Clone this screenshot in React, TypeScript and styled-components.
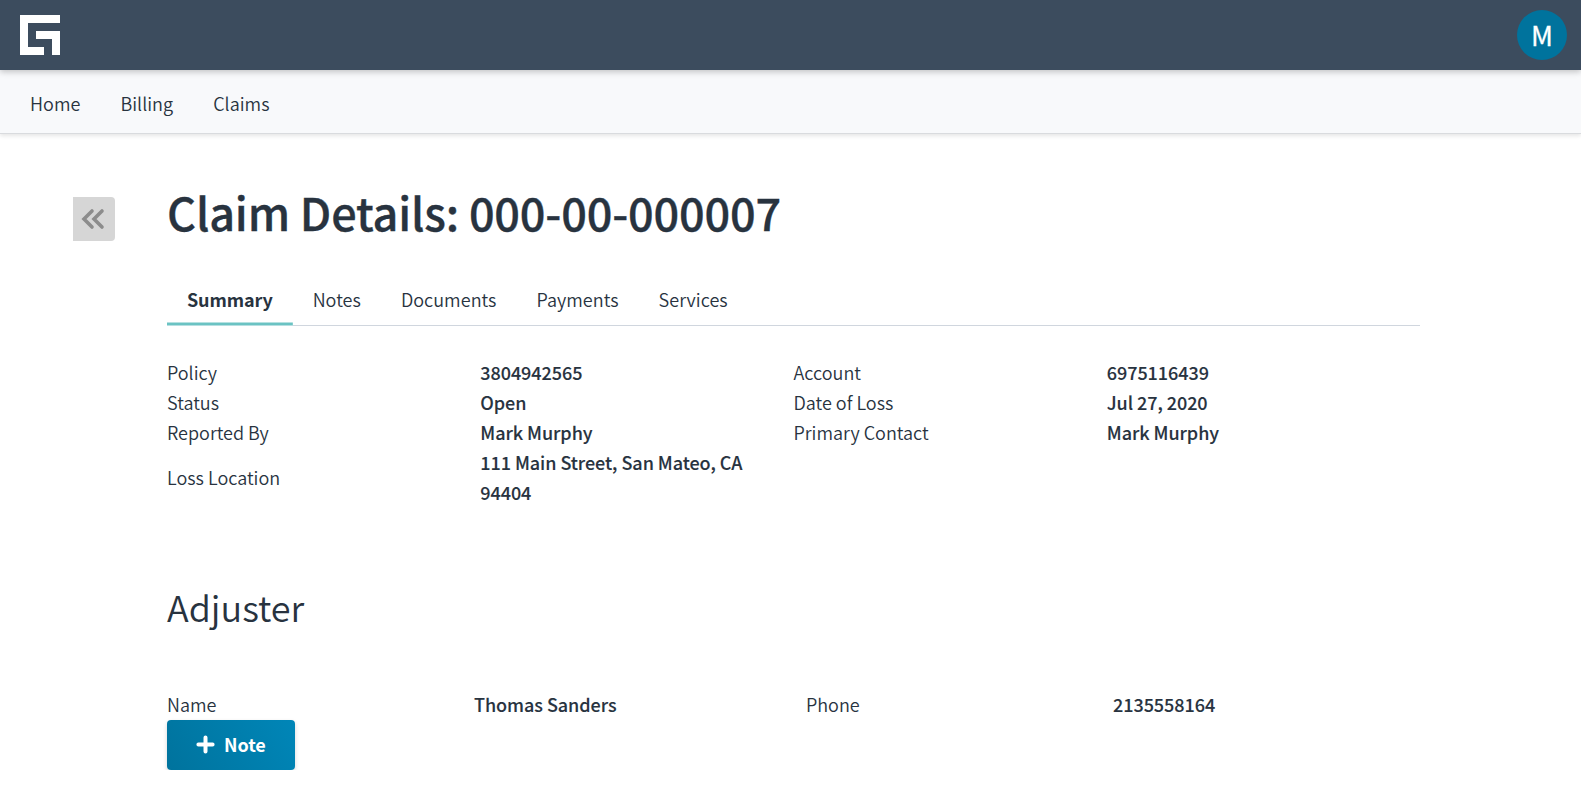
import React from "react";
import styled, { createGlobalStyle } from "styled-components";

const GlobalStyle = createGlobalStyle`
  *, *::before, *::after { box-sizing: border-box; }
  body {
    margin: 0;
    background: #fff;
    color: #28333f;
    font-family: "Noto Sans CJK SC", "Noto Sans", sans-serif;
    font-size: 18px;
    font-weight: 350;
    line-height: 30px;
    letter-spacing: 0;
  }
`;

const Header = styled.header`
  position: relative;
  z-index: 2;
  display: flex;
  align-items: center;
  justify-content: space-between;
  height: 70px;
  padding: 0 14px 0 20px;
  background: #3c4c5e;
  box-shadow: 0 2px 6px rgba(0, 0, 0, 0.22);
`;

const Avatar = styled.div`
  width: 50px;
  height: 50px;
  border-radius: 50%;
  background: #00739d;
  color: #fff;
  font-size: 27px;
  font-weight: 400;
  line-height: 50px;
  letter-spacing: 0;
  text-align: center;
  -webkit-text-stroke: 0.3px currentColor;
`;

const Nav = styled.nav`
  display: flex;
  align-items: center;
  height: 64px;
  padding: 0 10px 0 10px;
  background: #f8f9fb;
  border-bottom: 1px solid #d9dbde;
  box-shadow: 0 2px 4px rgba(0, 0, 0, 0.1);
`;

const NavLink = styled.a`
  padding: 3px 20px 0;
  letter-spacing: 0.04px;
`;

const Main = styled.main`
  display: flex;
  align-items: flex-start;
  padding: 63px 161px 0 73px;
`;

const CollapseButton = styled.button`
  display: flex;
  align-items: center;
  justify-content: center;
  flex: none;
  width: 42px;
  height: 44px;
  margin-right: 52px;
  padding: 0 2px 0 0;
  border: 0;
  border-radius: 0 4px 4px 0;
  background: #d6d6d6;
`;

const Content = styled.div`
  flex: 1;
`;

const Title = styled.h1`
  height: 63px;
  margin: 0;
  font-size: 45px;
  font-weight: 500;
  line-height: 30px;
  letter-spacing: -0.17px;
  -webkit-text-stroke: 0.35px currentColor;
`;

const Tabs = styled.div`
  display: flex;
  height: 66px;
  border-bottom: 1px solid #d0d6de;
`;

const Tab = styled.button<{ $active?: boolean }>`
  height: 66px;
  padding: 12px 20px 0;
  border: 0;
  background: ${(p) =>
    p.$active
      ? "linear-gradient(#b5e1e1 1px, #6bc3c3 1px, #6bc3c3 3px, #b5dfe1 3px) bottom / 100% 4px no-repeat"
      : "none"};
  color: inherit;
  font: inherit;
  font-weight: ${(p) => (p.$active ? 700 : "inherit")};
  letter-spacing: ${(p) => (p.$active ? "-0.12px" : "0.04px")};
`;

const Details = styled.div`
  display: grid;
  grid-template-columns: repeat(4, 1fr);
  align-items: center;
  margin-top: 31px;
`;

const Label = styled.div``;

const Value = styled.div`
  padding-right: 40px;
  font-weight: 500;
  letter-spacing: -0.05px;
  -webkit-text-stroke: 0.1px currentColor;
`;

const SectionTitle = styled.h2`
  margin: 74px 0 58px;
  font-size: 36px;
  font-weight: 350;
  line-height: 50px;
`;

const AdjusterRow = styled.div`
  display: grid;
  grid-template-columns: 307px 332px 307px 1fr;
  margin-bottom: 1px;
`;

const NoteButton = styled.button`
  display: flex;
  align-items: center;
  gap: 9px;
  width: 128px;
  height: 50px;
  padding: 0 0 2px 29px;
  border: 0;
  border-radius: 4px;
  background: linear-gradient(60deg, #00739d, #0086b8);
  box-shadow: 0 2px 4px rgba(0, 0, 0, 0.16);
  color: #fff;
  font: inherit;
  font-weight: 700;
  letter-spacing: -0.05px;
`;

const tabs = ["Summary", "Notes", "Documents", "Payments", "Services"];

const details: [string, string][] = [
  ["Policy", "3804942565"],
  ["Account", "6975116439"],
  ["Status", "Open"],
  ["Date of Loss", "Jul 27, 2020"],
  ["Reported By", "Mark Murphy"],
  ["Primary Contact", "Mark Murphy"],
  ["Loss Location", "111 Main Street, San Mateo, CA 94404"],
];

function Logo() {
  return (
    <svg width="40" height="40" viewBox="0 0 40 40" fill="#fff">
      <path d="M0 0H40V8H8V32H24V40H0Z" />
      <path d="M16 16H40V40H32V24H16Z" />
    </svg>
  );
}

function DoubleChevron() {
  return (
    <svg width="24" height="22" viewBox="0 0 24 22" fill="none" stroke="#8c8c8c" strokeWidth="3.6" strokeLinecap="round">
      <path d="M11 3L3 11L11 19M21 3L13 11L21 19" />
    </svg>
  );
}

function Plus() {
  return (
    <svg width="19" height="19" viewBox="0 0 19 19" stroke="#fff" strokeWidth="4" strokeLinecap="round">
      <path d="M9.5 2.4V16.6M2.4 9.5H16.6" />
    </svg>
  );
}

export default function App() {
  return (
    <>
      <GlobalStyle />
      <Header>
        <Logo />
        <Avatar>M</Avatar>
      </Header>
      <Nav>
        {["Home", "Billing", "Claims"].map((item) => (
          <NavLink key={item}>{item}</NavLink>
        ))}
      </Nav>
      <Main>
        <CollapseButton aria-label="Back">
          <DoubleChevron />
        </CollapseButton>
        <Content>
          <Title>Claim Details: 000-00-000007</Title>
          <Tabs>
            {tabs.map((tab, i) => (
              <Tab key={tab} $active={i === 0}>
                {tab}
              </Tab>
            ))}
          </Tabs>
          <Details>
            {details.map(([label, value]) => (
              <React.Fragment key={label}>
                <Label>{label}</Label>
                <Value>{value}</Value>
              </React.Fragment>
            ))}
          </Details>
          <SectionTitle>Adjuster</SectionTitle>
          <AdjusterRow>
            <Label>Name</Label>
            <Value>Thomas Sanders</Value>
            <Label>Phone</Label>
            <Value>2135558164</Value>
          </AdjusterRow>
          <NoteButton>
            <Plus />
            Note
          </NoteButton>
        </Content>
      </Main>
    </>
  );
}
